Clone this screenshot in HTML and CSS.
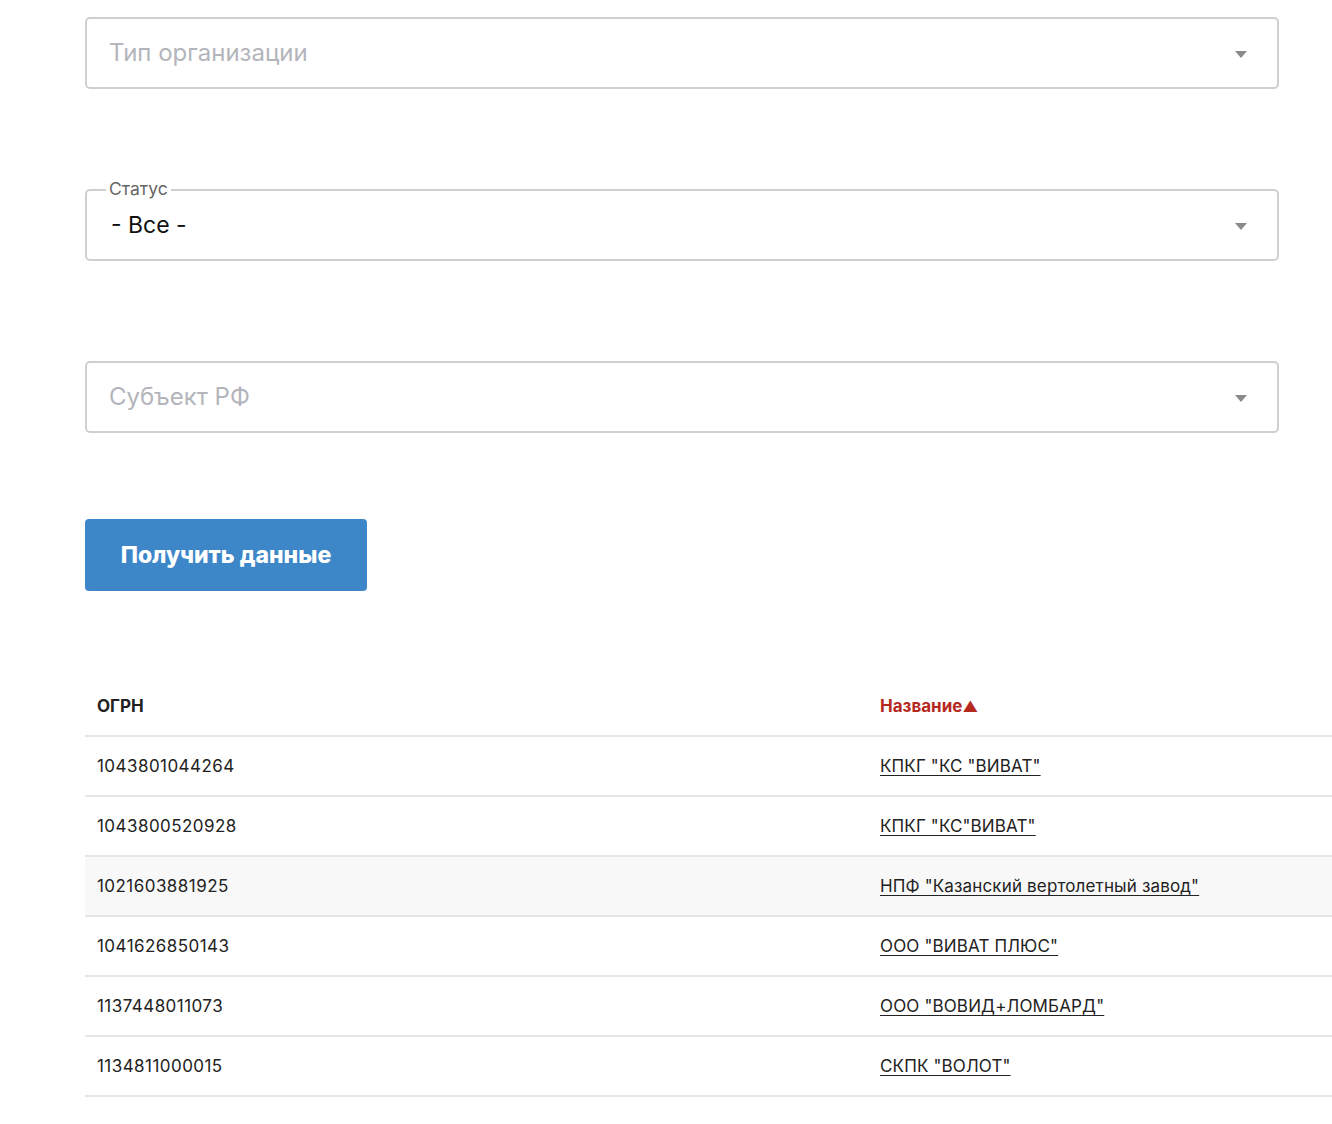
FILE: index.html
```html
<!DOCTYPE html>
<html lang="ru">
<head>
<meta charset="utf-8">
<link rel="stylesheet" href="styles.css">
</head>
<body>
<div class="page">
  <div class="field">
    <div class="select">
      <span class="placeholder">Тип организации</span>
      <span class="caret"></span>
    </div>
  </div>
  <div class="field">
    <div class="select outlined">
      <span class="legend">Статус</span>
      <span class="value">- Все -</span>
      <span class="caret"></span>
    </div>
  </div>
  <div class="field">
    <div class="select">
      <span class="placeholder">Субъект РФ</span>
      <span class="caret"></span>
    </div>
  </div>
  <button class="btn">Получить данные</button>
  <table class="grid">
    <colgroup><col class="col1"><col class="col2"></colgroup>
    <thead>
      <tr><th>ОГРН</th><th class="sorted">Название<span class="tri">▲</span></th></tr>
    </thead>
    <tbody>
      <tr><td class="num">1043801044264</td><td><a href="#">КПКГ "КС "ВИВАТ"</a></td></tr>
      <tr><td class="num">1043800520928</td><td><a href="#">КПКГ "КС"ВИВАТ"</a></td></tr>
      <tr class="hl"><td class="num">1021603881925</td><td><a href="#">НПФ "Казанский вертолетный завод"</a></td></tr>
      <tr><td class="num">1041626850143</td><td><a href="#">ООО "ВИВАТ ПЛЮС"</a></td></tr>
      <tr><td class="num">1137448011073</td><td><a href="#">ООО "ВОВИД+ЛОМБАРД"</a></td></tr>
      <tr><td class="num">1134811000015</td><td><a href="#">СКПК "ВОЛОТ"</a></td></tr>
    </tbody>
  </table>
</div>
</body>
</html>
```
FILE: styles.css
```css
html, body { margin: 0; padding: 0; background: #fff; }
body { font-family: Inter, "Liberation Sans", sans-serif; color: #222; overflow: hidden; }
.page { padding: 17px 0 0 85px; }
.field { width: 1194px; margin-bottom: 100px; }
.select {
  position: relative;
  height: 72px;
  box-sizing: border-box;
  border: 2px solid #cfcfd1;
  border-radius: 5px;
  display: flex;
  align-items: center;
  padding: 0 22px;
}
.placeholder { font-size: 24px; color: #b3b5bb; margin-top: -2px; }
.value { font-size: 23px; color: #111; padding-left: 2px; }
.legend {
  position: absolute;
  top: -12px;
  left: 19px;
  background: #fff;
  padding: 0 3px;
  font-size: 17.5px;
  color: #666;
  line-height: 20px;
}
.caret {
  position: absolute;
  right: 30px;
  top: 32px;
  width: 0; height: 0;
  border-left: 6px solid transparent;
  border-right: 6px solid transparent;
  border-top: 7px solid #8a8a8e;
}
.btn {
  display: block;
  width: 282px;
  height: 72px;
  margin-top: -14px;
  background: #3d87c9;
  color: #fff;
  border: 0;
  border-radius: 4px;
  font-family: Inter, "Liberation Sans", sans-serif;
  font-size: 23px;
  font-weight: 800;
  cursor: pointer;
}
.grid {
  margin-top: 84px;
  width: 1260px;
  table-layout: fixed;
  border-collapse: collapse;
  font-size: 17px;
}
.col1 { width: 783px; }
.grid th, .grid td {
  height: 58px;
  padding: 0 12px;
  text-align: left;
  border-bottom: 2px solid #e6e6e6;
}
.grid th { font-weight: 700; color: #222; padding-top: 2px; }
.grid th.sorted { color: #b5281e; }
.tri { font-size: 15px; }
.grid td.num { letter-spacing: 0.45px; }
.grid tr.hl td { background: #f8f8f8; }
.grid a { color: #222; text-decoration: underline; text-underline-offset: 3px; letter-spacing: 0.15px; }
```
